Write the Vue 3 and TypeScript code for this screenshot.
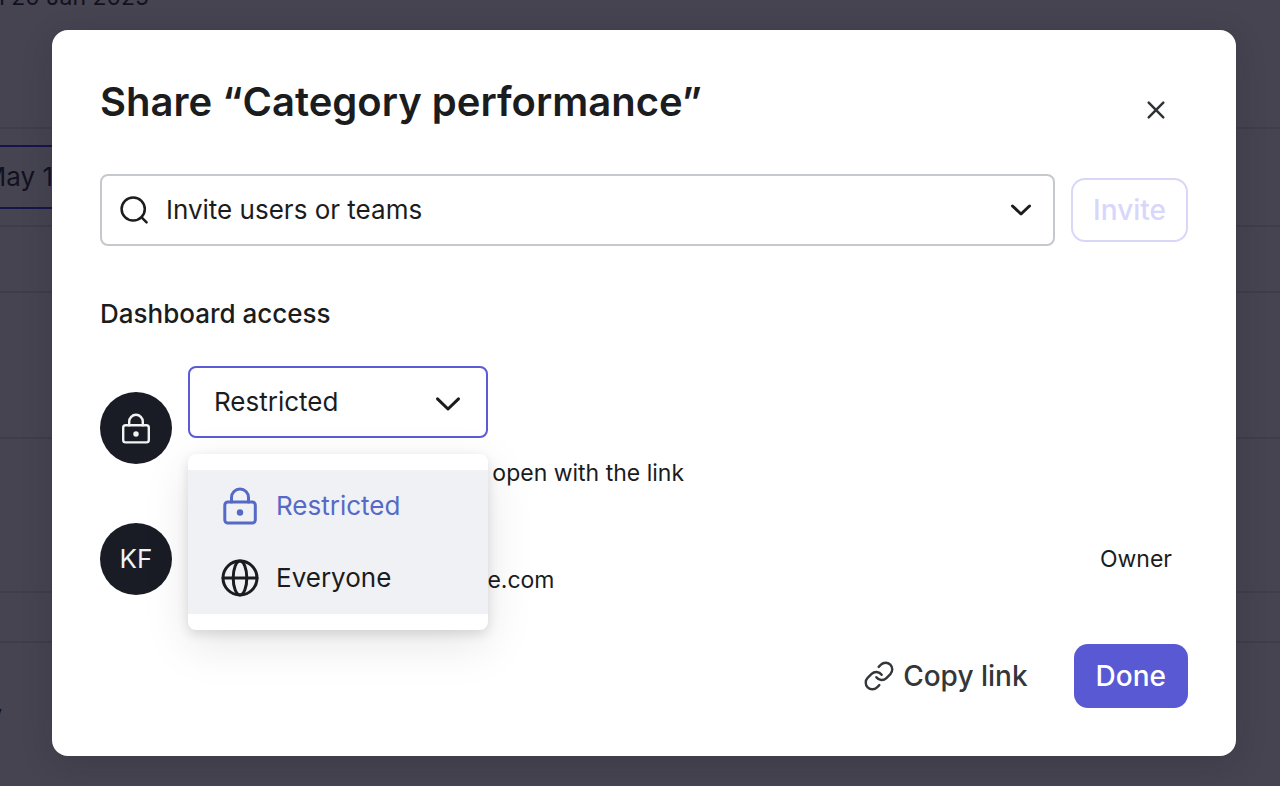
<script setup lang="ts">
import { computed, ref } from 'vue'

type Access = 'Restricted' | 'Everyone'

const options: Access[] = ['Restricted', 'Everyone']
const access = ref<Access>('Restricted')
const menuOpen = ref(true)
const invitee = ref('')
const canInvite = computed(() => invitee.value.trim().length > 0)

function choose(option: Access): void {
  access.value = option
  menuOpen.value = false
}
</script>

<template>
  <div class="page">
    <div class="report" aria-hidden="true">
      <div class="line"><span class="range">Jan 20 Jan 2025</span></div>
      <div class="line filter-line"><span class="date">May 1</span></div>
      <div class="line"></div>
      <div class="line"></div>
      <div class="line"></div>
      <div class="line"></div>
      <div class="line last-line"><span class="name">y</span></div>
    </div>

    <main class="dialog" role="dialog" aria-modal="true" aria-labelledby="share-title">
      <header class="head">
        <h1 id="share-title">Share “Category performance”</h1>
        <button class="close" type="button" aria-label="Close">
          <svg viewBox="0 0 24 24" width="24" height="24"><path d="M4.7 4.7 19.3 19.3M19.3 4.7 4.7 19.3" /></svg>
        </button>
      </header>

      <form class="invite" @submit.prevent>
        <div class="field">
          <svg class="search" viewBox="0 0 32 32" width="32" height="32">
            <circle cx="15.2" cy="15" r="11.6" /><path d="m23.6 23.4 5 5" />
          </svg>
          <input v-model="invitee" type="text" aria-label="Invite users or teams" placeholder="Invite users or teams" />
          <button class="expand" type="button" aria-label="Show suggestions">
            <svg viewBox="0 0 24 24" width="24" height="24"><path d="m3.5 8 8.5 8 8.5-8" /></svg>
          </button>
        </div>
        <button class="btn outline" type="submit" :disabled="!canInvite">Invite</button>
      </form>

      <h2>Dashboard access</h2>

      <section class="row access">
        <span class="avatar">
          <svg viewBox="0 0 40 40" width="32" height="32" class="lock">
            <rect x="4" y="16.5" width="32" height="21.5" rx="3" /><path d="M11.5 16.5v-4.500a8.5 8.5 0 0 1 17 0v4.500" />
            <circle class="dot" cx="20" cy="27.5" r="3.4" />
          </svg>
        </span>
        <div class="details">
          <div class="picker">
            <select v-model="access" aria-label="Dashboard access" @mousedown.prevent="menuOpen = !menuOpen">
              <option v-for="option in options" :key="option" :value="option">{{ option }}</option>
            </select>
            <svg class="caret" viewBox="0 0 32 32" width="32" height="32"><path d="m5.5 12.8 10.5 10.2 10.5-10.2" /></svg>
            <ul v-if="menuOpen" class="menu">
              <li v-for="option in options" :key="option">
                <button type="button" :class="{ active: option === access }" @click="choose(option)">
                  <svg v-if="option === 'Restricted'" class="lock" viewBox="0 0 40 40" width="40" height="40">
                    <rect x="4.8" y="16" width="30.5" height="21" rx="3" /><path d="M11.5 16v-4.5a8.5 8.5 0 0 1 17 0V16" />
                    <circle class="dot" cx="20" cy="26.5" r="3.2" />
                  </svg>
                  <svg v-else class="globe" viewBox="0 0 40 40" width="40" height="40">
                    <circle cx="20" cy="20" r="17" /><ellipse cx="20" cy="20" rx="6.8" ry="17" /><path d="M3 20h34" />
                  </svg>
                  {{ option }}
                </button>
              </li>
            </ul>
          </div>
          <p class="note">Only users with access can open with the link</p>
        </div>
      </section>

      <section class="row member">
        <span class="avatar">KF</span>
        <div class="details person">
          <p class="note">Katherine Foster</p>
          <p class="note">katherine.foster@tablesware.com</p>
        </div>
        <span class="role">Owner</span>
      </section>

      <footer class="actions">
        <button class="btn plain" type="button">
          <svg class="link" viewBox="0 0 24 24" width="32" height="32">
            <path d="M10 13a5 5 0 0 0 7.54.54l3-3a5 5 0 0 0-7.07-7.07l-1.72 1.71" />
            <path d="M14 11a5 5 0 0 0-7.54-.54l-3 3a5 5 0 0 0 7.07 7.07l1.71-1.71" />
          </svg>
          Copy link
        </button>
        <button class="btn primary" type="button">Done</button>
      </footer>
    </main>
  </div>
</template>

<style>
body {
  margin: 0;
}
</style>

<style scoped>
* {
  box-sizing: border-box;
}
.page {
  display: grid;
  min-height: 100vh;
  overflow: hidden;
  color: #1b1c1e;
  background: #464451;
  font-family: Inter, "Liberation Sans", sans-serif;
  font-size: 26px;
  line-height: 40px;
}
.report,
.dialog {
  grid-area: 1 / 1;
}
.report {
  display: grid;
  grid-template-rows: 129px 98px 66px 146px 154px 50px 1fr;
  color: #12111f;
}
.line {
  display: flex;
  justify-content: flex-start;
  border-bottom: 2px solid #3f3d4b;
}
.line > span {
  white-space: nowrap;
}
.range {
  display: flex;
  justify-content: flex-end;
  width: 149px;
  height: 9px;
  align-items: flex-end;
  font-size: 23px;
  line-height: 24px;
}
.filter-line {
  align-items: center;
}
.date {
  display: flex;
  align-items: center;
  justify-content: flex-end;
  width: 53px;
  height: 64px;
  border: solid #17144c;
  border-width: 2px 0;
}
.last-line {
  border: 0;
  padding-top: 52px;
}
.name {
  display: flex;
  justify-content: flex-end;
  width: 2px;
  font-weight: 600;
}
.dialog {
  align-self: start;
  margin: 30px 44px 30px 52px;
  padding: 48px;
  border-radius: 16px;
  background: #fff;
  box-shadow: 0 8px 32px rgba(20, 18, 32, 0.16);
}
h1,
h2,
p,
ul {
  margin: 0;
  padding: 0;
}
button,
input,
select {
  margin: 0;
  padding: 0;
  border: 0;
  background: none;
  color: inherit;
  font: inherit;
}
svg {
  flex: none;
  fill: none;
  stroke: currentColor;
  stroke-width: 2.5;
  stroke-linecap: round;
  stroke-linejoin: round;
}
.head {
  display: flex;
  justify-content: space-between;
  height: 96px;
}
h1 {
  font-size: 40px;
  font-weight: 600;
  line-height: 48px;
}
.close {
  display: grid;
  place-items: center;
  width: 64px;
  height: 64px;
  color: #2f3336;
}
.invite {
  display: flex;
  align-items: center;
  gap: 16px;
}
.field {
  display: flex;
  flex: 1;
  align-items: center;
  gap: 16px;
  min-width: 0;
  height: 72px;
  padding: 0 20px 0 16px;
  border: 2px solid #c5c8cd;
  border-radius: 8px;
}
.field input {
  flex: 1;
  min-width: 0;
  outline: 0;
}
.field input::placeholder {
  color: inherit;
  opacity: 1;
}
.expand {
  display: grid;
}
.expand svg {
  stroke-width: 3;
}
.btn {
  display: flex;
  align-items: center;
  justify-content: center;
  gap: 8px;
  height: 64px;
  padding: 0 22px;
  border-radius: 14px;
  font-size: 28px;
  font-weight: 500;
}
.outline {
  padding: 0 20px;
  border: 2px solid #d8d7fa;
  color: #d8d7fa;
}
h2 {
  margin-top: 48px;
  font-size: 26px;
  font-weight: 500;
  line-height: 40px;
}
.row {
  display: flex;
  align-items: center;
  gap: 16px;
}
.access {
  margin-top: 32px;
}
.avatar {
  display: grid;
  flex: none;
  place-items: center;
  width: 72px;
  height: 72px;
  border-radius: 50%;
  background: #1a1c25;
  color: #f2f2f3;
}
.lock,
.globe {
  stroke-width: 3;
}
.link {
  stroke-width: 1.8;
}
.dot {
  fill: currentColor;
  stroke: none;
}
.details {
  display: grid;
  flex: 1;
  gap: 18px;
}
.person {
  gap: 8px;
}
.picker {
  position: relative;
  display: grid;
  align-items: center;
  width: 300px;
}
select,
.caret {
  grid-area: 1 / 1;
}
select {
  height: 72px;
  padding: 0 24px;
  border: 2px solid #5b5bd6;
  border-radius: 8px;
  appearance: none;
}
.caret {
  justify-self: end;
  margin-right: 24px;
  stroke-width: 3;
  pointer-events: none;
}
.menu {
  position: absolute;
  top: 88px;
  left: 0;
  z-index: 1;
  width: 100%;
  padding: 16px 0;
  border-radius: 8px;
  background: #fff;
  box-shadow: 0 14px 48px rgba(0, 0, 0, 0.1), 0 4px 12px rgba(0, 0, 0, 0.12);
  list-style: none;
}
.menu button {
  display: flex;
  align-items: center;
  gap: 16px;
  width: 100%;
  height: 72px;
  padding: 0 32px;
  background: #f0f1f5;
}
.menu .active {
  color: #566ac5;
}
.note,
.role {
  font-size: 23px;
  line-height: 34px;
}
.member {
  margin-top: 31px;
}
.role {
  margin-right: 16px;
}
.actions {
  display: flex;
  justify-content: flex-end;
  gap: 24px;
  margin-top: 47px;
}
.plain {
  color: #33373a;
}
.primary {
  background: #5959d3;
  color: #fff;
}
</style>
